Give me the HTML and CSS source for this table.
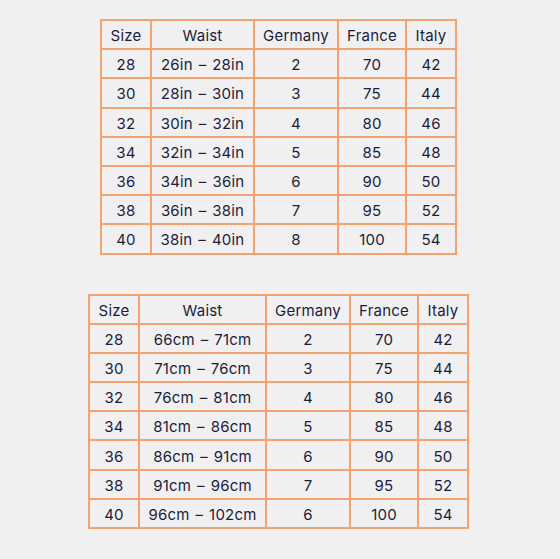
FILE: index.html
```html
<!DOCTYPE html>
<html>
<head>
<meta charset="utf-8">
<link rel="stylesheet" href="styles.css">
</head>
<body>
<div class="page">
  <table class="sizes in">
    <colgroup><col class="c-size"><col class="c-waist"><col class="c-de"><col class="c-fr"><col class="c-it"></colgroup>
    <tr><th>Size</th><th>Waist</th><th>Germany</th><th>France</th><th>Italy</th></tr>
    <tr><td>28</td><td>26in – 28in</td><td>2</td><td>70</td><td>42</td></tr>
    <tr><td>30</td><td>28in – 30in</td><td>3</td><td>75</td><td>44</td></tr>
    <tr><td>32</td><td>30in – 32in</td><td>4</td><td>80</td><td>46</td></tr>
    <tr><td>34</td><td>32in – 34in</td><td>5</td><td>85</td><td>48</td></tr>
    <tr><td>36</td><td>34in – 36in</td><td>6</td><td>90</td><td>50</td></tr>
    <tr><td>38</td><td>36in – 38in</td><td>7</td><td>95</td><td>52</td></tr>
    <tr><td>40</td><td>38in – 40in</td><td>8</td><td>100</td><td>54</td></tr>
  </table>
  <table class="sizes cm">
    <colgroup><col class="c-size"><col class="c-waist"><col class="c-de"><col class="c-fr"><col class="c-it"></colgroup>
    <tr><th>Size</th><th>Waist</th><th>Germany</th><th>France</th><th>Italy</th></tr>
    <tr><td>28</td><td>66cm – 71cm</td><td>2</td><td>70</td><td>42</td></tr>
    <tr><td>30</td><td>71cm – 76cm</td><td>3</td><td>75</td><td>44</td></tr>
    <tr><td>32</td><td>76cm – 81cm</td><td>4</td><td>80</td><td>46</td></tr>
    <tr><td>34</td><td>81cm – 86cm</td><td>5</td><td>85</td><td>48</td></tr>
    <tr><td>36</td><td>86cm – 91cm</td><td>6</td><td>90</td><td>50</td></tr>
    <tr><td>38</td><td>91cm – 96cm</td><td>7</td><td>95</td><td>52</td></tr>
    <tr><td>40</td><td>96cm – 102cm</td><td>6</td><td>100</td><td>54</td></tr>
  </table>
</div>
</body>
</html>
```
FILE: styles.css
```css
html, body {
  margin: 0;
  background: #f0f0f0;
}
body {
  font-family: Inter, "Open Sans", sans-serif;
  font-size: 15px;
  letter-spacing: 0.2px;
  word-spacing: 1.5px;
  color: #1c1c3c;
}
.page {
  display: flex;
  flex-direction: column;
  align-items: center;
  gap: 39px;
  padding: 19px 3px 0 0;
}
.sizes {
  border-collapse: collapse;
  table-layout: fixed;
  border: 2px solid #f3a270;
}
.sizes.in { width: 357px; }
.sizes.cm { width: 381px; }
.sizes th, .sizes td {
  border: 2px solid #f3a270;
  height: 25.2px;
  padding: 2px 0 0;
  text-align: center;
  font-weight: normal;
  white-space: nowrap;
}
.c-size { width: 50px; }
.in .c-waist { width: 103px; }
.cm .c-waist { width: 127px; }
.c-de { width: 84px; }
.c-fr { width: 68px; }
.c-it { width: 50px; }
```
